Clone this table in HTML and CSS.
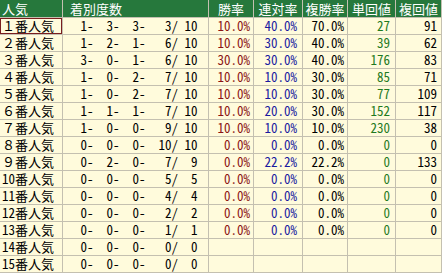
FILE: index.html
```html
<!DOCTYPE html>
<html lang="ja">
<head>
<meta charset="utf-8">
<link rel="stylesheet" href="styles.css">
</head>
<body>
<div class="tbl">
  <div class="row head">
    <div class="c lab">人気</div>
    <div class="c cnt">着別度数</div>
    <div class="c">勝率</div>
    <div class="c">連対率</div>
    <div class="c">複勝率</div>
    <div class="c">単回値</div>
    <div class="c">複回値</div>
  </div>
  <div class="row"><div class="c lab sel">１番人気</div><div class="c cnt"> 1-  3-  3-   3/ 10</div><div class="c win">10.0%</div><div class="c ren">40.0%</div><div class="c fuku">70.0%</div><div class="c tan">27</div><div class="c fk">91</div></div>
  <div class="row"><div class="c lab">２番人気</div><div class="c cnt"> 1-  2-  1-   6/ 10</div><div class="c win">10.0%</div><div class="c ren">30.0%</div><div class="c fuku">40.0%</div><div class="c tan">39</div><div class="c fk">62</div></div>
  <div class="row"><div class="c lab">３番人気</div><div class="c cnt"> 3-  0-  1-   6/ 10</div><div class="c win">30.0%</div><div class="c ren">30.0%</div><div class="c fuku">40.0%</div><div class="c tan">176</div><div class="c fk">83</div></div>
  <div class="row"><div class="c lab">４番人気</div><div class="c cnt"> 1-  0-  2-   7/ 10</div><div class="c win">10.0%</div><div class="c ren">10.0%</div><div class="c fuku">30.0%</div><div class="c tan">85</div><div class="c fk">71</div></div>
  <div class="row"><div class="c lab">５番人気</div><div class="c cnt"> 1-  0-  2-   7/ 10</div><div class="c win">10.0%</div><div class="c ren">10.0%</div><div class="c fuku">30.0%</div><div class="c tan">77</div><div class="c fk">109</div></div>
  <div class="row"><div class="c lab">６番人気</div><div class="c cnt"> 1-  1-  1-   7/ 10</div><div class="c win">10.0%</div><div class="c ren">20.0%</div><div class="c fuku">30.0%</div><div class="c tan">152</div><div class="c fk">117</div></div>
  <div class="row"><div class="c lab">７番人気</div><div class="c cnt"> 1-  0-  0-   9/ 10</div><div class="c win">10.0%</div><div class="c ren">10.0%</div><div class="c fuku">10.0%</div><div class="c tan">230</div><div class="c fk">38</div></div>
  <div class="row"><div class="c lab">８番人気</div><div class="c cnt"> 0-  0-  0-  10/ 10</div><div class="c win">0.0%</div><div class="c ren">0.0%</div><div class="c fuku">0.0%</div><div class="c tan">0</div><div class="c fk">0</div></div>
  <div class="row"><div class="c lab">９番人気</div><div class="c cnt"> 0-  2-  0-   7/  9</div><div class="c win">0.0%</div><div class="c ren">22.2%</div><div class="c fuku">22.2%</div><div class="c tan">0</div><div class="c fk">133</div></div>
  <div class="row"><div class="c lab"><span class="hw">10</span>番人気</div><div class="c cnt"> 0-  0-  0-   5/  5</div><div class="c win">0.0%</div><div class="c ren">0.0%</div><div class="c fuku">0.0%</div><div class="c tan">0</div><div class="c fk">0</div></div>
  <div class="row"><div class="c lab"><span class="hw">11</span>番人気</div><div class="c cnt"> 0-  0-  0-   4/  4</div><div class="c win">0.0%</div><div class="c ren">0.0%</div><div class="c fuku">0.0%</div><div class="c tan">0</div><div class="c fk">0</div></div>
  <div class="row"><div class="c lab"><span class="hw">12</span>番人気</div><div class="c cnt"> 0-  0-  0-   2/  2</div><div class="c win">0.0%</div><div class="c ren">0.0%</div><div class="c fuku">0.0%</div><div class="c tan">0</div><div class="c fk">0</div></div>
  <div class="row"><div class="c lab"><span class="hw">13</span>番人気</div><div class="c cnt"> 0-  0-  0-   1/  1</div><div class="c win">0.0%</div><div class="c ren">0.0%</div><div class="c fuku">0.0%</div><div class="c tan">0</div><div class="c fk">0</div></div>
  <div class="row"><div class="c lab"><span class="hw">14</span>番人気</div><div class="c cnt"> 0-  0-  0-   0/  0</div><div class="c win"></div><div class="c ren"></div><div class="c fuku"></div><div class="c tan"></div><div class="c fk"></div></div>
  <div class="row"><div class="c lab"><span class="hw">15</span>番人気</div><div class="c cnt"> 0-  0-  0-   0/  0</div><div class="c win"></div><div class="c ren"></div><div class="c fuku"></div><div class="c tan"></div><div class="c fk"></div></div>
</div>
</body>
</html>
```

FILE: styles.css
```css
html, body {
  margin: 0;
  padding: 0;
  background: #ffffff;
}

.tbl {
  display: flex;
  flex-direction: column;
  gap: 1px;
  width: max-content;
  background: #c4c0b0;
  padding: 0 1px 1px 0;
  font-family: "Noto Sans CJK JP", sans-serif;
  font-size: 13px;
  font-feature-settings: "hwid";
}

.row {
  display: grid;
  grid-template-columns: 62px 145px 44px 48px 44px 47px 45px;
  gap: 1px;
  height: 16px;
}

.row.head {
  height: 17px;
}

.c {
  background: #fffbdc;
  color: #000000;
  line-height: 16px;
  white-space: pre;
  text-align: right;
  padding: 0 4px 0 0;
}

.head .c {
  background: #26783c;
  color: #ffffff;
  text-align: center;
  padding: 0;
  line-height: 17px;
}

.head .c.lab {
  text-align: left;
  padding-left: 2px;
}

.head .c.cnt {
  text-align: left;
  padding-left: 7px;
}

.c.lab {
  text-align: left;
  padding: 0 0 0 2px;
  font-feature-settings: normal;
}

.c.lab .hw {
  font-feature-settings: "hwid";
}

.c.sel {
  box-shadow: inset 0 0 0 1px #7a1e1e;
}

.c.cnt {
  text-align: left;
  padding: 0 0 0 11px;
}

.c.win {
  color: #8b1414;
  padding-right: 3px;
}

.c.ren {
  color: #1a1aa0;
  padding-right: 5px;
}

.c.fuku {
  padding-right: 3px;
}

.c.tan {
  color: #1f7a1f;
  padding-right: 5px;
}

.c.fk {
  padding-right: 4px;
}
```
